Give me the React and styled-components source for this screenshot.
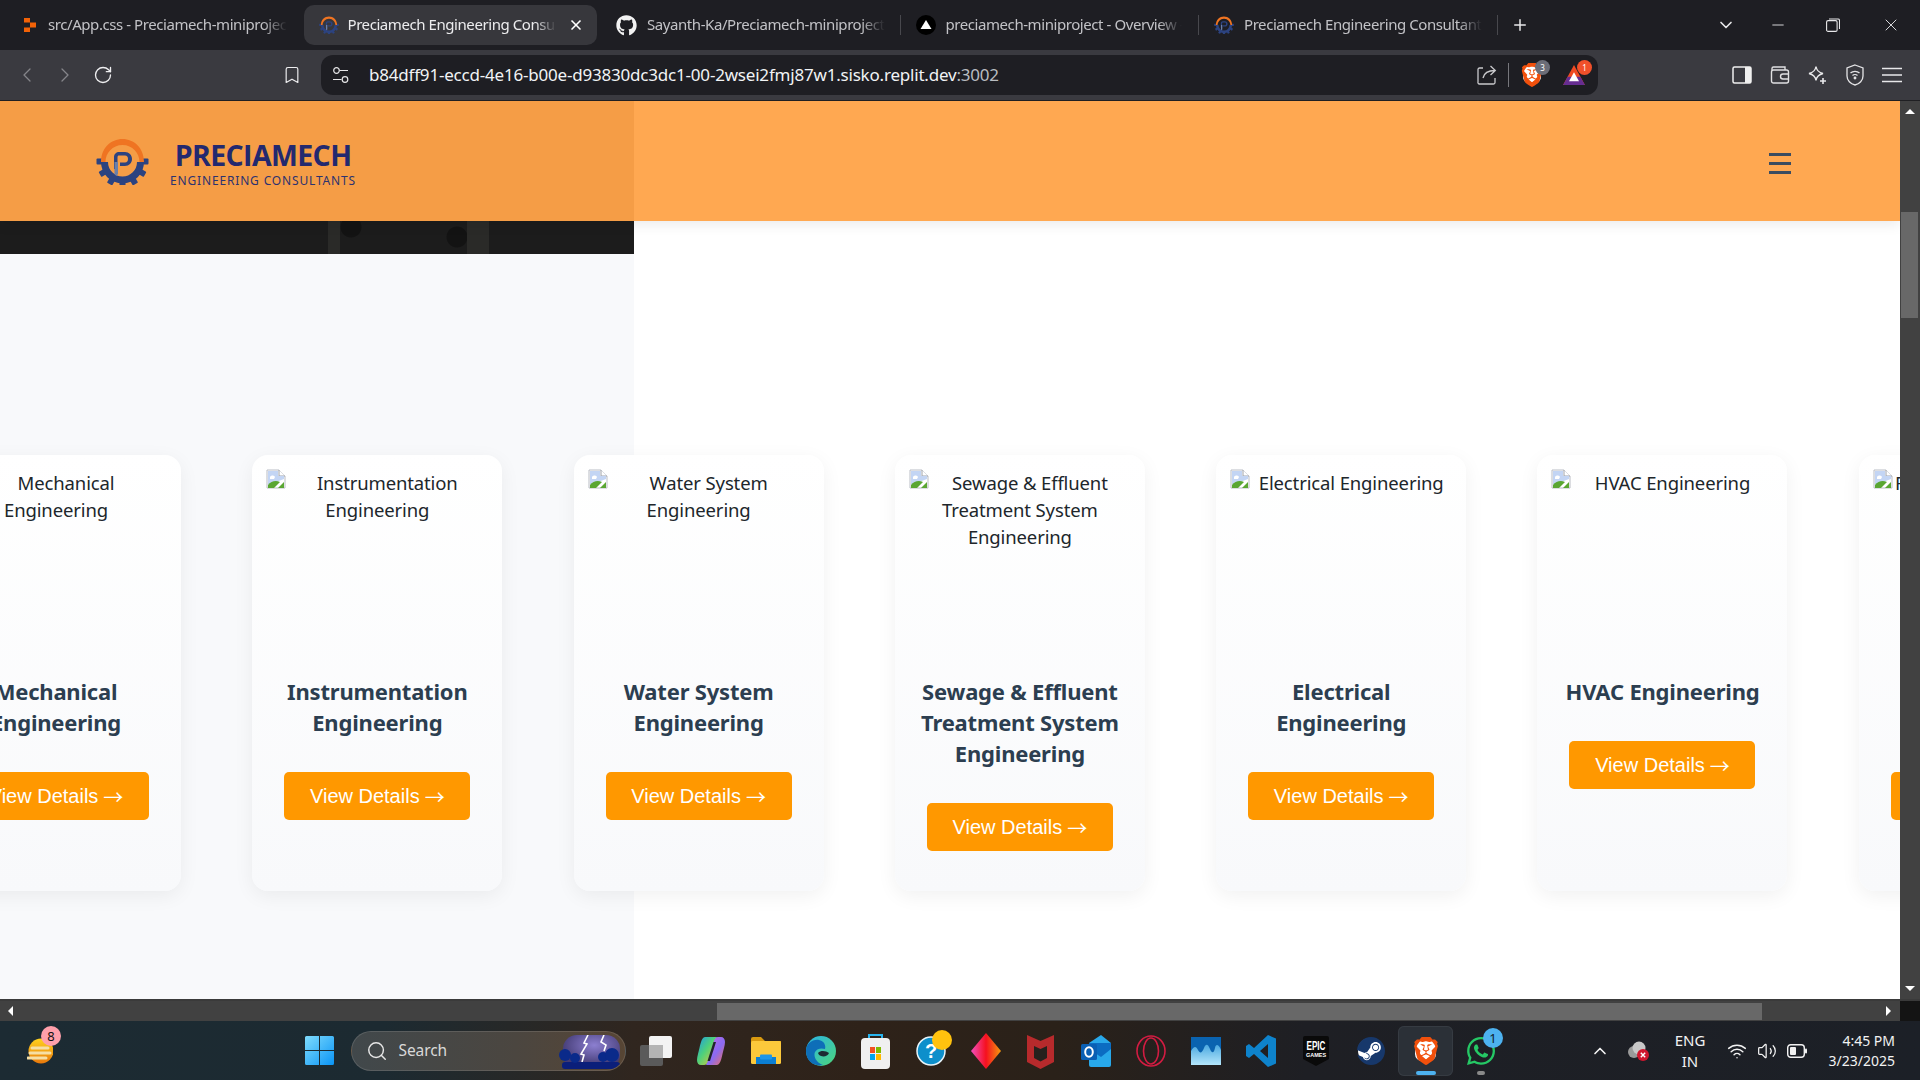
import React from 'react';
import styled, { createGlobalStyle } from 'styled-components';
import { FaGithub, FaWhatsapp } from 'react-icons/fa';
import { SiBrave, SiSteam } from 'react-icons/si';
import { ChevronLeft, ChevronRight, RotateCw, Bookmark, X, Plus, ChevronDown, Minus, Search, ChevronUp, Wifi, Volume2 } from 'lucide-react';

const UI = '"Noto Sans", "Open Sans", sans-serif';

const Global = createGlobalStyle`
  html, body { margin: 0; padding: 0; width: 100%; height: 100%; overflow: hidden; background: #fff; }
  * { box-sizing: border-box; }
`;

const Shell = styled.div`
  width: 1920px; height: 1080px; display: flex; flex-direction: column; font-family: ${UI};
`;

/* Tabs */
const TabStrip = styled.div`
  height: 50px; background: #1e1e23; display: flex; align-items: center; padding-left: 5px; flex: none;
`;
const Tab = styled.div`
  width: ${p => (p.$active ? 293 : 298.5)}px; margin-right: ${p => (p.$active ? 5.5 : 0)}px;
  height: 40px; display: flex; align-items: center; position: relative;
  padding-left: ${p => p.$pad || 15}px; gap: ${p => p.$gap || 10}px; border-radius: 10px;
  background: ${p => (p.$active ? '#37373c' : 'transparent')};
  color: ${p => (p.$active ? '#ececee' : '#c2c2c6')};
  &::after {
    content: ''; position: absolute; right: 0; top: 10px; height: 20px; width: 1px;
    background: ${p => (p.$sep ? '#48484d' : 'transparent')};
  }
`;
const TabTitle = styled.span`
  font-size: 15px; letter-spacing: -0.43px; white-space: nowrap; overflow: hidden; width: ${p => p.$w || 239}px; padding-bottom: 2px;
  -webkit-mask-image: linear-gradient(to right, #000 90%, transparent 100%);
  mask-image: linear-gradient(to right, #000 90%, transparent 100%);
`;
const TabClose = styled.span`
  display: flex; margin-left: 3px; color: #fff;
`;
const NewTab = styled.span`
  display: flex; margin-left: 13px; color: #e8e8ea;
`;
const WindowControls = styled.div`
  margin-left: auto; display: flex; align-items: center; color: #e8e8ea; height: 100%;
`;
const WinBtn = styled.span`
  width: ${p => p.$w || 56}px; display: flex; justify-content: center; align-items: center;
`;

/* Toolbar */
const Toolbar = styled.div`
  height: 51px; background: #3a3a40; border-bottom: 1px solid #1f1f22; display: flex; align-items: center; flex: none;
  padding-bottom: 1px;
`;
const NavCluster = styled.div`
  width: 321px; display: flex; align-items: center; color: #e6e6e8; flex: none; padding-left: 8px;
`;
const NavBtn = styled.span`
  width: ${p => p.$w || 38}px; display: flex; justify-content: center; color: ${p => (p.$dim ? '#85858a' : '#eeeef0')};
  margin-left: ${p => p.$ml || 0}px;
`;
const Address = styled.div`
  width: 1277px; height: 40px; border-radius: 12px; background: #1e1e23; display: flex; align-items: center; padding-left: 11px; color: #eceef0; flex: none;
`;
const Url = styled.span`
  margin-left: 19px; font-size: 17px; letter-spacing: -0.2px; white-space: nowrap; color: #f1f3f5;
`;
const UrlPort = styled.span`
  color: #b9bcc0;
`;
const AddressEnd = styled.div`
  margin-left: auto; display: flex; align-items: center;
`;
const Divider = styled.span`
  width: 1px; height: 24px; background: #77777c; margin: 0 11px;
`;
const ShieldWrap = styled.span`
  position: relative; display: flex; width: ${p => p.$w}px; margin-right: ${p => p.$mr || 0}px;
`;
const MiniBadge = styled.span`
  position: absolute; left: ${p => p.$l}px; top: ${p => p.$t}px; width: 15px; height: 15px; border-radius: 50%;
  background: ${p => p.$bg}; color: #fff; font-size: 8px; display: flex; align-items: center; justify-content: center;
`;
const ToolRight = styled.div`
  display: flex; align-items: center; padding-left: 134px; gap: 17.5px; color: #e8e8ea;
`;

/* Viewport */
const Viewport = styled.div`
  height: 898px; display: flex; flex: none;
`;
const Page = styled.div`
  width: 1900px; height: 100%; display: flex; flex-direction: column; overflow: hidden;
  background: linear-gradient(to right, #f8f9fb 634px, #fff 634px);
`;
const Header = styled.header`
  height: 120px; background: #ffa851; display: flex; align-items: center; flex: none; position: relative;
  box-shadow: 0 4px 12px rgba(0,0,0,.08); z-index: 2; padding-right: 109px;
`;
const HeaderTint = styled.div`
  width: 634px; height: 100%; background: #f59d46; display: flex; align-items: center; padding-left: 96px; gap: 21px;
`;
const Brand = styled.div`
  display: flex; flex-direction: column; align-items: center; color: #23296f; padding-top: 9px;
`;
const BrandName = styled.span`
  font-family: "Open Sans", sans-serif; font-weight: 700; font-size: 28.500px; line-height: 30px; letter-spacing: -0.6px; margin-top: -3px;
`;
const BrandSub = styled.span`
  font-size: 12px; line-height: 15px; letter-spacing: 0.84px; margin-top: 3px; color: #2c3270;
`;
const Burger = styled.div`
  margin-left: auto; margin-top: 4px; width: 22px; display: flex; flex-direction: column; gap: 6px;
`;
const BurgerBar = styled.span`
  height: 3px; background: #3b4c60; display: block;
`;
const HeroStrip = styled.div`
  width: 634px; height: 33px; flex: none; display: flex; padding-left: 328px;
  background:
    radial-gradient(circle at 351px 6px, #131313 10px, transparent 11px),
    radial-gradient(circle at 457px 16px, #131313 10px, transparent 11px),
    #1c1c1c;
`;
const HeroLeg = styled.span`
  width: ${p => p.$w}px; margin-right: ${p => p.$mr || 0}px; height: 100%; background: #2a2a28; display: block;
`;
const Services = styled.section`
  flex: 1; padding-top: 201px; overflow: hidden;
`;
const Track = styled.div`
  display: flex; gap: 71.3px; margin-left: -69px; width: max-content;
`;
const Card = styled.article`
  width: 250px; height: 436px; border-radius: 16px; flex: none; padding: 14px;
  background: linear-gradient(180deg, #ffffff 0%, #f8f9fb 100%);
  box-shadow: 0 5px 20px rgba(0,0,0,.06);
  display: flex; flex-direction: column; align-items: center; text-align: center;
`;
const ImageBox = styled.div`
  width: 222px; height: 207px; flex: none; color: #20262b;
  font-size: 18.500px; line-height: 27px; letter-spacing: -0.13px;
`;
const Broken = styled.svg`
  float: left; width: 20px; height: 20px;
`;
const CardTitle = styled.h3`
  margin: 0 0 33.500px; font-size: 22px; line-height: 31px; font-weight: 700; color: #2c3e50; letter-spacing: -0.2px;
  width: 222px;
`;
const DetailButton = styled.a`
  width: 186px; height: 48px; flex: none; background: #ff9800; color: #fff; border-radius: 5px; padding-top: 1px;
  font-family: "Liberation Sans", Arial, sans-serif; font-size: 20px; display: flex; align-items: center; justify-content: center; gap: 5px;
`;
const ArrowGlyph = styled.span`
  font-family: "Noto Sans CJK SC", "DejaVu Sans", sans-serif; font-size: 20px; line-height: 1; margin-top: 2px;
`;
const VBar = styled.div`
  width: 20px; flex: none; background: #414141; display: flex; flex-direction: column; align-items: center; position: relative;
`;
const ArrowUp = styled.span`
  margin-top: 8px; width: 0; height: 0; border-left: 5px solid transparent; border-right: 5px solid transparent; border-bottom: 5px solid #fff;
`;
const ArrowDown = styled.span`
  margin-top: auto; margin-bottom: 8px; width: 0; height: 0; border-left: 5px solid transparent; border-right: 5px solid transparent; border-top: 5px solid #fff;
`;
const VThumb = styled.span`
  position: absolute; top: 111px; left: 1px; width: 17px; height: 106px; background: #686868;
`;
const HBar = styled.div`
  height: 22px; background: #414141; flex: none; display: flex; align-items: center; position: relative; border-top: 2px solid #3a3a3a;
`;
const ArrowLeft = styled.span`
  margin-left: 8px; width: 0; height: 0; border-top: 5px solid transparent; border-bottom: 5px solid transparent; border-right: 5px solid #fff;
`;
const HThumb = styled.span`
  margin-left: 704px; width: 1045px; height: 17px; background: #686868;
`;
const ArrowRight = styled.span`
  margin-left: 124px; width: 0; height: 0; border-top: 5px solid transparent; border-bottom: 5px solid transparent; border-left: 5px solid #fff;
`;
const Corner = styled.span`
  margin-left: auto; width: 20px; height: 100%; background: #141414;
`;

/* Taskbar */
const Taskbar = styled.footer`
  flex: 1; display: flex; align-items: center; color: #fff; padding-left: 27px;
  background: linear-gradient(90deg, #1c2b33 0%, #1c2a31 20%, #30261f 33%, #2e2219 45%, #2a2119 55%, #1e1f24 68%, #1c2027 100%);
`;
const Weather = styled.div`
  position: relative; width: 26px; height: 26px; display: flex; margin-right: 239px;
`;
const Slot = styled.div`
  width: 55px; height: 50px; flex: none; display: flex; align-items: center; justify-content: center; position: relative;
  border-radius: 6px;
  ${p => p.$active && `background: #2b3037; box-shadow: inset 0 0 0 1px #363b42;`}
`;
const CountBadge = styled.span`
  position: absolute; width: ${p => p.$s || 20}px; height: ${p => p.$s || 20}px; border-radius: 50%; left: ${p => p.$l}px; top: ${p => p.$t}px;
  background: ${p => p.$bg}; color: ${p => p.$fg || '#111'}; font-size: 13px; display: flex; align-items: center; justify-content: center;
`;
const Indicator = styled.span`
  position: absolute; bottom: 1px; left: 50%; transform: translateX(-50%); height: 4px; border-radius: 2px;
  width: ${p => p.$w}px; background: ${p => p.$bg};
`;
const FilledMark = styled.span`
  position: relative; display: flex;
  &::before {
    content: ''; position: absolute; inset: ${p => p.$inset || '14%'}; background: #fff; border-radius: ${p => p.$round || '35%'};
  }
  & > svg { position: relative; }
`;
const SearchPill = styled.div`
  width: 275px; height: 40px; border-radius: 20px; margin: 0 2.500px 0 3.500px; background: linear-gradient(90deg, #41484b, #4b4640 60%, #574534);
  border: 1px solid rgba(255,255,255,.12); display: flex; align-items: center; padding-left: 14px; gap: 11px; position: relative; flex: none; overflow: hidden;
  color: #e6e6e6;
`;
const SearchLabel = styled.span`
  font-size: 15.500px; letter-spacing: -0.1px; color: #d9d9d9; padding-bottom: 1px;
`;
const SearchArt = styled.svg`
  position: absolute; right: 3px; top: 3px;
`;
const Tray = styled.div`
  display: flex; align-items: center; flex: 1; padding-left: 77px; color: #f2f2f2;
`;
const TrayIcon = styled.span`
  display: flex; width: ${p => p.$w || 30}px; justify-content: center; margin-right: ${p => p.$mr || 0}px;
`;
const Lang = styled.div`
  width: 50px; font-size: 15px; line-height: 21px; text-align: center; margin-right: 9px; color: #f2f2f2;
`;
const Clock = styled.div`
  margin-left: auto; margin-right: 25px; font-size: 14px; line-height: 20px; text-align: right; color: #f2f2f2;
`;

const BrokenIcon = () => (
  <Broken viewBox="0 0 20 20">
    <path d="M1 1h12l6 6v12H1z" fill="#fff" stroke="#b9bcc4" strokeWidth="1" />
    <path d="M13 1v6h6" fill="#fff" stroke="#9ea2aa" strokeWidth="1" />
    <path d="M2 2h10v5h6v3L2 16z" fill="#c3d5f4" />
    <path d="M4 8c1-2 4-2 5 0l-1 2H4z" fill="#fff" />
    <path d="M2 19v-3c3-4 8-5 12-3L8 19z" fill="#5aa632" />
    <path d="M12 19l6-6v6z" fill="#5aa632" />
  </Broken>
);

const gearTeeth = () => {
  const out = [];
  for (let i = 0; i < 7; i += 1) {
    const a = i * 30;
    out.push(<rect key={a} x="-3" y="20" width="6" height="6" fill="#2c4380" rx="1" transform={`translate(26.5 23.5) rotate(${a - 90})`} />);
  }
  return out;
};

const LogoMark = ({ size = 53 }) => (
  <svg width={size} height={size * 47 / 53} viewBox="0 0 53 47">
    <g>{gearTeeth()}</g>
    <path d="M5 24a21.500 21.500 0 0 0 43 0h-7a14.500 14.500 0 0 1-29 0z" fill="#2c4380" />
    <path d="M5 24C5 10 15 1 26.500 1S48 10 48 24h-4.500c0-9-7-17-17-17s-17 8-17 17z" fill="#ef7422" />
    <path d="M18 31V19c0-3 2.500-5 5-5h6c4 0 7 3 7 7s-3 7-7 7h-5v-3.500h5c2 0 3-1.500 3-3.500s-1-3.500-3-3.500h-6c-1 0-1.500 .6-1.500 2v12z" fill="#2c4380" />
    <path d="M18.500 24h3.500v12l-1.700 2-1.800-2z" fill="#6c7fa8" />
  </svg>
);

const Favicon = () => <LogoMark size={20} />;

const Vercel = () => (
  <svg width="20" height="20" viewBox="0 0 20 20"><circle cx="10" cy="10" r="10" fill="#000" /><path d="M10 5l5.500 9h-11z" fill="#fff" /></svg>
);
const Replit = () => (
  <svg width="14" height="16" viewBox="0 0 14 16"><path d="M1 1h6v4.500H1zM7 5.500h6v5H7zM1 10.500h6V15H1z" fill="#f26207" /></svg>
);
const TuneIcon = () => (
  <svg width="18" height="18" viewBox="0 0 18 18" fill="none" stroke="#e6e6e8" strokeWidth="1.200">
    <circle cx="4.500" cy="4.500" r="2.800" /><path d="M7.500 4.500H16M1 13.500h8.500" /><circle cx="13" cy="13.500" r="2.800" />
  </svg>
);
const ShareIcon = () => (
  <svg width="20" height="20" viewBox="0 0 20 20" fill="none" stroke="#c9c9cc" strokeWidth="1.300">
    <path d="M6 3H2.500A1.500 1.500 0 0 0 1 4.500v12.500A1.500 1.500 0 0 0 2.500 19h14A1.500 1.500 0 0 0 18 17.500V13" />
    <path d="M6 13c1-5 5-7.500 12-7.500M13.500 1l4.800 4.500-4.800 4.500" />
  </svg>
);
const BatTri = () => (
  <svg width="22" height="20" viewBox="0 0 24 22">
    <path d="M12 0l12 22H0z" fill="#f04a23" /><path d="M0 22l5-9 14 0 5 9z" fill="#662d91" /><path d="M12 8l5.500 10h-11z" fill="#fff" />
  </svg>
);
const PanelIcon = () => (
  <svg width="20" height="20" viewBox="0 0 20 20"><rect x="1" y="2" width="18" height="16" rx="1.500" fill="none" stroke="#f0f0f0" strokeWidth="1.500" /><rect x="13" y="2" width="6" height="16" fill="#f0f0f0" /></svg>
);
const WalletIcon = () => (
  <svg width="20" height="20" viewBox="0 0 20 20" fill="none" stroke="#e0e0e2" strokeWidth="1.400"><path d="M2 5V3.500A1.500 1.500 0 0 1 3.500 2H15v3" /><rect x="1.500" y="5" width="17" height="13" rx="2" /><path d="M18.500 9H13a2.500 2.500 0 0 0 0 5h5.500" /></svg>
);
const SparkIcon = () => (
  <svg width="20" height="20" viewBox="0 0 20 20" fill="none" stroke="#e8e8ea" strokeWidth="1.400"><path d="M9 1.500c.6 4 2.500 6 7 7-4.500 1-6.400 3-7 7-.6-4-2.500-6-7-7 4.500-1 6.400-3 7-7z" /><path d="M16 13v6M13 16h6" strokeWidth="1.600" /></svg>
);
const VpnIcon = () => (
  <svg width="20" height="22" viewBox="0 0 20 22" fill="none" stroke="#e4e4e6" strokeWidth="1.300"><path d="M10 1l8 3v8c0 4.500-3.500 8-8 9-4.500-1-8-4.500-8-9V4z" /><path d="M5.500 9c2.500-2.300 6.500-2.300 9 0M7.500 11.500c1.300-1.200 3.700-1.200 5 0" /><circle cx="10" cy="14" r=".8" fill="#e4e4e6" /></svg>
);
const MenuIcon = () => (
  <svg width="20" height="16" viewBox="0 0 20 16"><path d="M0 1.500h20M0 8h20M0 14.500h20" stroke="#e8e8ea" strokeWidth="1.500" /></svg>
);
const RestoreIcon = () => (
  <svg width="14" height="14" viewBox="0 0 14 14" fill="none" stroke="#e8e8ea" strokeWidth="1.100"><rect x=".6" y="2.600" width="10.500" height="10.800" rx="1.500" /><path d="M3 1h9a1.500 1.500 0 0 1 1.500 1.500V11" /></svg>
);
const WeatherIcon = () => (
  <svg width="26" height="26" viewBox="0 0 26 26"><defs><linearGradient id="wsun" x1="0" y1="0" x2="0" y2="1"><stop offset="0" stopColor="#ffd21e" /><stop offset="1" stopColor="#e8790c" /></linearGradient></defs><circle cx="14" cy="13" r="12.500" fill="url(#wsun)" /><path d="M5 10h16M3 15h20M1 20h18" stroke="#f6dfa4" strokeWidth="3" strokeLinecap="round" /></svg>
);
const WinLogo = () => (
  <svg width="29" height="29" viewBox="0 0 29 29"><defs><linearGradient id="wl" x1="0" y1="0" x2="1" y2="1"><stop offset="0" stopColor="#7fdcfd" /><stop offset="1" stopColor="#0a94f5" /></linearGradient></defs><path d="M1.500 0H14v14H0V1.500A1.500 1.500 0 0 1 1.500 0zM15 0h12.500A1.500 1.500 0 0 1 29 1.500V14H15zM0 15h14v14H1.500A1.500 1.500 0 0 1 0 27.500zM15 15h14v12.500a1.500 1.500 0 0 1-1.500 1.500H15z" fill="url(#wl)" /></svg>
);
const TaskView = () => (
  <svg width="32" height="30" viewBox="0 0 32 30"><rect x="0" y="9" width="23" height="21" rx="2" fill="#5a5a5a" /><rect x="9" y="0" width="23" height="22" rx="2" fill="#f3f3f3" /><rect x="9" y="9" width="14" height="13" fill="#b4b4b4" /></svg>
);
const Copilot = () => (
  <svg width="28" height="30" viewBox="0 0 28 30"><defs><linearGradient id="cp1" x1="0" y1="0" x2="1" y2="1"><stop offset="0" stopColor="#1c9be8" /><stop offset=".45" stopColor="#4fd17a" /><stop offset="1" stopColor="#f6c52e" /></linearGradient><linearGradient id="cp2" x1="0" y1="0" x2="1" y2="1"><stop offset="0" stopColor="#c96be8" /><stop offset=".55" stopColor="#8a6bf2" /><stop offset="1" stopColor="#f3705a" /></linearGradient></defs><path d="M8 1h12l-3 5-6 20c-.5 2-2 3-4 3H4c-2.500 0-4-2-4-5 0-2 .5-4 1-6C3 11 4 1 8 1z" fill="url(#cp1)" /><path d="M20 29H9l2-4 6-20c.5-2 2-4 4-4h3c2.500 0 4 2 4 5 0 2-.5 4-1 6-2 7-3 17-7 17z" fill="url(#cp2)" /><path d="M16.500 6h2.500l-6 19h-2.500z" fill="#20262b" /></svg>
);
const Folder = () => (
  <svg width="30" height="27" viewBox="0 0 30 27"><path d="M0 2a2 2 0 0 1 2-2h8l4 4h16v4H0z" fill="#d99a10" /><rect x="0" y="4" width="30" height="23" rx="1.500" fill="#fcc93b" /><rect x="5" y="20" width="20" height="7" fill="#0b7fd4" /><rect x="9" y="17.500" width="12" height="5" rx="1" fill="#1e96e8" /></svg>
);
const Edge = () => (
  <svg width="30" height="30" viewBox="0 0 30 30"><defs><linearGradient id="ed" x1="0" y1="0" x2="1" y2="1"><stop offset="0" stopColor="#2bb4e6" /><stop offset="1" stopColor="#4cd67a" /></linearGradient></defs><circle cx="15" cy="15" r="15" fill="url(#ed)" /><path d="M0 15C0 7 7 3 13 4c5 1 7 5 6 9-3-1-8-1-10 3-2 5 2 11 8 13C8 31 0 25 0 15z" fill="#0e6eb8" /><path d="M12 17c3-3 8-2 11 0-1 3-5 4-8 3-1.500-.5-2.500-1.500-3-3z" fill="#1d2a33" /></svg>
);
const Store = () => (
  <svg width="29" height="36" viewBox="0 0 29 36"><path d="M8 7V2h13v5" fill="none" stroke="#28b4ee" strokeWidth="2" /><rect x="0" y="5" width="29" height="31" rx="4" fill="#f0f0f0" /><rect x="9" y="14" width="5" height="6" fill="#f25022" /><rect x="15" y="14" width="5" height="6" fill="#7fba00" /><rect x="9" y="21" width="5" height="6" fill="#00a4ef" /><rect x="15" y="21" width="5" height="6" fill="#ffb900" /></svg>
);
const HelpIcon = () => (
  <svg width="30" height="30" viewBox="0 0 30 30"><circle cx="15" cy="15" r="14" fill="#0d8fcb" stroke="#e8f4fa" strokeWidth="1.500" /><text x="15" y="22" fontSize="20" fontWeight="700" fontFamily="Liberation Sans, sans-serif" fill="#fff" textAnchor="middle">?</text></svg>
);
const Diamond = () => (
  <svg width="30" height="36" viewBox="0 0 30 36"><defs><linearGradient id="dm" x1="0" y1="0" x2="1" y2="0"><stop offset="0" stopColor="#f24fc0" /><stop offset=".5" stopColor="#f5101f" /><stop offset="1" stopColor="#f59a0e" /></linearGradient></defs><path d="M15 0l15 18-15 18L0 18z" fill="url(#dm)" /></svg>
);
const McAfee = () => (
  <svg width="27" height="36" viewBox="0 0 27 36"><path d="M0 2l13.500 6L27 2v27l-13.500 7L0 29z" fill="#b72a2c" /><path d="M7 13l6.500 3 6.500-3v12l-6.500 3.500L7 25z" fill="#26211d" /></svg>
);
const Outlook = () => (
  <svg width="30" height="32" viewBox="0 0 30 32"><path d="M8 8l12-8 10 8v22a2 2 0 0 1-2 2H10a2 2 0 0 1-2-2z" fill="#28a8ea" /><path d="M8 8h22v6L20 22 8 14z" fill="#0b6cc2" /><rect x="0" y="9" width="16" height="16" rx="1.500" fill="#0a5fb4" /><ellipse cx="8" cy="17" rx="3.800" ry="4.800" fill="none" stroke="#fff" strokeWidth="2" /></svg>
);
const Opera = () => (
  <svg width="30" height="32" viewBox="0 0 30 32" fill="none" stroke="#d21c42" strokeWidth="1.600"><ellipse cx="15" cy="16" rx="14" ry="15" /><ellipse cx="15" cy="16" rx="7.500" ry="13" /></svg>
);
const Photos = () => (
  <svg width="30" height="28" viewBox="0 0 30 28"><defs><linearGradient id="ph" x1="0" y1="0" x2="0" y2="1"><stop offset="0" stopColor="#4aa8e0" /><stop offset="1" stopColor="#b4e6fb" /></linearGradient></defs><rect width="30" height="28" fill="#0a63b0" /><path d="M0 14c3-5 5-5 7-1s4 3 6-2 4-4 6 1 4 4 5-1 4-3 6 2v15H0z" fill="url(#ph)" /></svg>
);
const VSCode = () => (
  <svg width="30" height="32" viewBox="0 0 30 32"><path d="M22 0l8 3.500v25L22 32 8 19l-5 4-3-2v-10l3-2 5 4zM22 9l-8 7 8 7z" fill="#0e83cc" fillRule="evenodd" /></svg>
);
const EpicGames = () => (
  <svg width="26" height="30" viewBox="0 0 26 30">
    <path d="M2 0h22a2 2 0 0 1 2 2v21l-13 7-13-7V2a2 2 0 0 1 2-2z" fill="#0a0a0a" />
    <text x="13" y="14" fontSize="12" fontWeight="700" fontFamily="Liberation Sans, sans-serif" fill="#fff" textAnchor="middle" textLength="19" lengthAdjust="spacingAndGlyphs">EPIC</text>
    <text x="13" y="21" fontSize="5.500" fontWeight="700" fontFamily="Liberation Sans, sans-serif" fill="#fff" textAnchor="middle">GAMES</text>
  </svg>
);
const OneDriveX = () => (
  <svg width="22" height="20" viewBox="0 0 22 20"><circle cx="6" cy="11" r="6" fill="#9a9a9a" /><circle cx="11" cy="7" r="6.500" fill="#c8c8c8" /><circle cx="15" cy="14" r="6" fill="#d0162e" /><path d="M12.800 11.800l4.400 4.400M17.200 11.800l-4.400 4.400" stroke="#fff" strokeWidth="1.400" /></svg>
);
const Battery = () => (
  <svg width="20" height="14" viewBox="0 0 20 14"><rect x=".7" y=".7" width="16.600" height="12.600" rx="3" fill="none" stroke="#f2f2f2" strokeWidth="1.400" /><rect x="3" y="3" width="6" height="8" rx="1" fill="#f2f2f2" /><rect x="18" y="4.500" width="2" height="5" rx="1" fill="#f2f2f2" /></svg>
);
const StormArt = () => (
  <SearchArt width="64" height="34" viewBox="0 0 64 34">
    <defs><radialGradient id="st" cx=".55" cy=".3" r=".6"><stop offset="0" stopColor="#8c7fd0" /><stop offset="1" stopColor="#423a73" /></radialGradient></defs>
    <rect x="5" y="0" width="57" height="34" rx="14" fill="url(#st)" />
    <path d="M30 0l-4 8 3 1-6 10 3 1-2 7M46 0l-3 7 5 3-2 6" fill="none" stroke="#fff" strokeWidth="1.600" />
    <rect x="4" y="27" width="58" height="7" rx="3" fill="#0b1f7a" />
    <circle cx="7" cy="20" r="6" fill="#0a2a8a" /><circle cx="17" cy="23" r="5" fill="#0a2a8a" /><circle cx="45" cy="22" r="5" fill="#0a2a8a" /><circle cx="54" cy="20" r="7" fill="#0a2a8a" />
  </SearchArt>
);

const services = [
  'Mechanical Engineering',
  'Instrumentation Engineering',
  'Water System Engineering',
  'Sewage & Effluent Treatment System Engineering',
  'Electrical Engineering',
  'HVAC Engineering',
  'Fire Safety Engineering',
];

const dock = [
  <TaskView key="tv" />, <Copilot key="cp" />, <Folder key="fo" />, <Edge key="ed" />, <Store key="st" />,
];

export default function App() {
  return (
    <Shell>
      <Global />
      <TabStrip>
        <Tab $pad={18} $gap={11}><Replit /><TabTitle>src/App.css - Preciamech-miniproject</TabTitle></Tab>
        <Tab $active $pad={15} $gap={9}><Favicon /><TabTitle $w={208}>Preciamech Engineering Consultants</TabTitle><TabClose><X size={16} strokeWidth={2.500} /></TabClose></Tab>
        <Tab $sep $pad={14}><FaGithub size={21} color="#f2f2f2" /><TabTitle $w={238}>Sayanth-Ka/Preciamech-miniproject</TabTitle></Tab>
        <Tab $sep $pad={15}><Vercel /><TabTitle $w={236}>preciamech-miniproject - Overview - Vercel</TabTitle></Tab>
        <Tab $sep $pad={15}><Favicon /><TabTitle $w={238}>Preciamech Engineering Consultants</TabTitle></Tab>
        <NewTab><Plus size={18} strokeWidth={2} /></NewTab>
        <WindowControls>
          <WinBtn $w={50}><ChevronDown size={20} strokeWidth={2} /></WinBtn>
          <WinBtn $w={54}><Minus size={18} strokeWidth={1.200} /></WinBtn>
          <WinBtn $w={56}><RestoreIcon /></WinBtn>
          <WinBtn $w={59}><X size={20} strokeWidth={1.100} /></WinBtn>
        </WindowControls>
      </TabStrip>
      <Toolbar>
        <NavCluster>
          <NavBtn $dim><ChevronLeft size={24} strokeWidth={1.300} /></NavBtn>
          <NavBtn $dim><ChevronRight size={24} strokeWidth={1.300} /></NavBtn>
          <NavBtn><RotateCw size={20} strokeWidth={1.600} /></NavBtn>
          <NavBtn $ml={153} $w={34}><Bookmark size={20} strokeWidth={1.400} /></NavBtn>
        </NavCluster>
        <Address>
          <TuneIcon />
          <Url>b84dff91-eccd-4e16-b00e-d93830dc3dc1-00-2wsei2fmj87w1.sisko.replit.dev<UrlPort>:3002</UrlPort></Url>
          <AddressEnd>
            <ShareIcon />
            <Divider />
            <ShieldWrap $w={43}>
              <FilledMark><SiBrave size={24} color="#f1500c" /></FilledMark>
              <MiniBadge $l={15} $t={-3} $bg="#6b6d78">3</MiniBadge>
            </ShieldWrap>
            <ShieldWrap $w={22} $mr={13}>
              <BatTri />
              <MiniBadge $l={14} $t={-5} $bg="#f0502a">1</MiniBadge>
            </ShieldWrap>
          </AddressEnd>
        </Address>
        <ToolRight>
          <PanelIcon />
          <WalletIcon />
          <SparkIcon />
          <VpnIcon />
          <MenuIcon />
        </ToolRight>
      </Toolbar>
      <Viewport>
        <Page>
          <Header>
            <HeaderTint>
              <LogoMark />
              <Brand>
                <BrandName>PRECIAMECH</BrandName>
                <BrandSub>ENGINEERING CONSULTANTS</BrandSub>
              </Brand>
            </HeaderTint>
            <Burger><BurgerBar /><BurgerBar /><BurgerBar /></Burger>
          </Header>
          <HeroStrip>
            <HeroLeg $w={12} $mr={127} />
            <HeroLeg $w={22} />
          </HeroStrip>
          <Services>
            <Track>
              {services.map(title => (
                <Card key={title}>
                  <ImageBox><BrokenIcon />{title}</ImageBox>
                  <CardTitle>{title}</CardTitle>
                  <DetailButton>View Details <ArrowGlyph>→</ArrowGlyph></DetailButton>
                </Card>
              ))}
            </Track>
          </Services>
        </Page>
        <VBar><ArrowUp /><VThumb /><ArrowDown /></VBar>
      </Viewport>
      <HBar><ArrowLeft /><HThumb /><ArrowRight /><Corner /></HBar>
      <Taskbar>
        <Weather>
          <WeatherIcon />
          <CountBadge $l={14} $t={-12} $bg="#ffa0ab">8</CountBadge>
        </Weather>
        <Slot><WinLogo /></Slot>
        <SearchPill>
          <Search size={22} strokeWidth={1.600} />
          <SearchLabel>Search</SearchLabel>
          <StormArt />
        </SearchPill>
        {dock.map(d => <Slot key={d.key}>{d}</Slot>)}
        <Slot><HelpIcon /><CountBadge $l={29} $t={4} $bg="#ffc20e" /></Slot>
        <Slot><Diamond /></Slot>
        <Slot><McAfee /></Slot>
        <Slot><Outlook /></Slot>
        <Slot><Opera /></Slot>
        <Slot><Photos /></Slot>
        <Slot><VSCode /></Slot>
        <Slot><EpicGames /></Slot>
        <Slot><FilledMark $inset="6%" $round="50%"><SiSteam size={28} color="#17386b" /></FilledMark></Slot>
        <Slot $active><FilledMark><SiBrave size={28} color="#f1500c" /></FilledMark><Indicator $w={20} $bg="#4db2f0" /></Slot>
        <Slot><FaWhatsapp size={32} color="#25c865" /><CountBadge $l={30} $t={2} $bg="#4db2f0" $fg="#10212c">1</CountBadge><Indicator $w={8} $bg="#8a8a8a" /></Slot>
        <Tray>
          <TrayIcon $mr={9}><ChevronUp size={20} strokeWidth={2} /></TrayIcon>
          <TrayIcon $w={30} $mr={11}><OneDriveX /></TrayIcon>
          <Lang>ENG<br />IN</Lang>
          <TrayIcon $w={26}><Wifi size={20} strokeWidth={1.800} /></TrayIcon>
          <TrayIcon $w={34}><Volume2 size={20} strokeWidth={1.500} /></TrayIcon>
          <TrayIcon $w={26}><Battery /></TrayIcon>
          <Clock>4:45 PM<br />3/23/2025</Clock>
        </Tray>
      </Taskbar>
    </Shell>
  );
}
